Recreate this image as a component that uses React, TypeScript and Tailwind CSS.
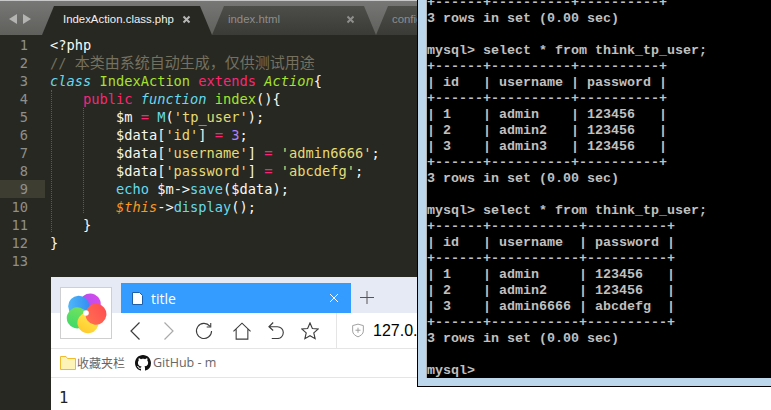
import React from 'react';

const C = {
  pink: 'text-[#f92672]',
  blue: 'text-[#66d9ef]',
  green: 'text-[#a6e22e]',
  yellow: 'text-[#e6db74]',
  purple: 'text-[#ae81ff]',
  orange: 'text-[#fd971f]',
  gray: 'text-[#75715e]',
};

const S: React.FC<{ c: string; i?: boolean; children: React.ReactNode }> = ({ c, i, children }) => (
  <span className={`${c} ${i ? 'italic' : ''}`}>{children}</span>
);

const codeLines: React.ReactNode[] = [
  <>{'<?php'}</>,
  <span className={C.gray}>// <span className="text-[15px]">{'本类由系统自动生成\uFF0C仅供测试用途'}</span></span>,
  <>
    <S c={C.blue} i>class</S> <S c={C.green}>IndexAction</S> <S c={C.pink}>extends</S> <S c={C.green} i>Action</S>{'{'}
  </>,
  <>
    {'    '}<S c={C.pink}>public</S> <S c={C.blue} i>function</S> <S c={C.green}>index</S>{'(){'}
  </>,
  <>
    {'        $m '}<S c={C.pink}>=</S> <S c={C.blue}>M</S>{'('}<S c={C.yellow}>'tp_user'</S>{');'}
  </>,
  <>
    {"        $data["}<S c={C.yellow}>'id'</S>{'] '}<S c={C.pink}>=</S> <S c={C.purple}>3</S>{';'}
  </>,
  <>
    {"        $data["}<S c={C.yellow}>'username'</S>{'] '}<S c={C.pink}>=</S> <S c={C.yellow}>'admin6666'</S>{';'}
  </>,
  <>
    {"        $data["}<S c={C.yellow}>'password'</S>{'] '}<S c={C.pink}>=</S> <S c={C.yellow}>'abcdefg'</S>{';'}
  </>,
  <>
    {'        '}<S c={C.blue}>echo</S>{' $m->'}<S c={C.blue}>save</S>{'($data);'}
  </>,
  <>
    {'        '}<S c={C.orange} i>$this</S>{'->'}<S c={C.blue}>display</S>{'();'}
  </>,
  <>{'    }'}</>,
  <>{'}'}</>,
  <>{' '}</>,
];

const consoleText = `+------+----------+----------+
3 rows in set (0.00 sec)

mysql> select * from think_tp_user;
+------+----------+----------+
| id   | username | password |
+------+----------+----------+
| 1    | admin    | 123456   |
| 2    | admin2   | 123456   |
| 3    | admin3   | 123456   |
+------+----------+----------+
3 rows in set (0.00 sec)

mysql> select * from think_tp_user;
+------+-----------+----------+
| id   | username  | password |
+------+-----------+----------+
| 1    | admin     | 123456   |
| 2    | admin2    | 123456   |
| 3    | admin6666 | abcdefg  |
+------+-----------+----------+
3 rows in set (0.00 sec)

mysql>`;

const TabClose = ({ color }: { color: string }) => (
  <svg width="9" height="9" viewBox="0 0 9 9" className="shrink-0">
    <path d="M1.5 1.5l6 6M7.5 1.5l-6 6" stroke={color} strokeWidth="2" />
  </svg>
);

const Editor = () => (
  <div className="h-[277px] bg-[#272822] overflow-hidden flex flex-col">
    {/* tab strip */}
    <div className="h-[35px] shrink-0 flex border-t border-[#c8c8c8] bg-gradient-to-b from-[#777775] to-[#5f605c]">
      <div className="w-[42px] shrink-0 flex items-center pl-[9px] gap-[6px] pt-[2px]">
        <svg width="8" height="10" viewBox="0 0 8 10" className="shrink-0"><path d="M8 0v10L0 5z" fill="#b4b4b2" /></svg>
        <svg width="8" height="10" viewBox="0 0 8 10" className="shrink-0"><path d="M0 0v10l8-5z" fill="#b4b4b2" /></svg>
      </div>
      <div className="w-[170px] shrink-0 mt-[5px] bg-[#272822] [clip-path:polygon(12px_0,158px_0,170px_100%,0_100%)] flex items-center pl-[21px] pb-[2px] text-[11.4px] text-[#f1f1ef] font-['Liberation_Sans',sans-serif]">
        <span className="w-[119px] shrink-0 whitespace-nowrap">IndexAction.class.php</span>
        <TabClose color="#b6b6b4" />
      </div>
      <div className="w-[164px] shrink-0 mt-[5px] bg-gradient-to-b from-[#4d4d4a] to-[#3a3b36] [clip-path:polygon(12px_0,152px_0,164px_100%,0_100%)] flex items-center pl-[16px] pb-[2px] text-[11.4px] text-[#8e8e8c] font-['Liberation_Sans',sans-serif]">
        <span className="w-[118px] shrink-0">index.html</span>
        <TabClose color="#8e8e8c" />
      </div>
      <div className="flex-1 mt-[5px] bg-gradient-to-b from-[#4d4d4a] to-[#3a3b36] [clip-path:polygon(12px_0,100%_0,100%_100%,0_100%)] flex items-center pl-[16px] pb-[2px] text-[11.4px] text-[#8e8e8c] font-['Liberation_Sans',sans-serif] overflow-hidden">
        config
      </div>
    </div>
    {/* code */}
    <div className="pt-px flex text-[13.7px] leading-[18px] font-['DejaVu_Sans_Mono','Noto_Sans_CJK_SC',monospace] text-[#f8f8f2]">
      <div className="w-[45px] shrink-0">
        {codeLines.map((_, i) => (
          <div key={i} className={`h-[18px] pr-[17px] text-right text-[#8f908a] ${i === 8 ? 'bg-[#3e3d32]' : ''}`}>
            {i + 1}
          </div>
        ))}
      </div>
      <div className="relative pl-[5px] flex-1 whitespace-pre">
        <div className="absolute left-[6px] top-[54px] h-[142px] border-l border-dotted border-[#5a5b52]" />
        <div className="absolute left-[38px] top-[72px] h-[105px] border-l border-dotted border-[#5a5b52]" />
        {codeLines.map((l, i) => (
          <div key={i} className="h-[18px]">{l}</div>
        ))}
      </div>
    </div>
  </div>
);

const Logo = () => (
  <svg width="42" height="42" viewBox="0 0 42 42" className="shrink-0">
    <defs>
      <linearGradient id="pb" x1="0" y1="0" x2="1" y2="1"><stop offset="0" stopColor="#55c0fb" /><stop offset="1" stopColor="#2f86f0" /></linearGradient>
      <linearGradient id="pp" x1="0" y1="1" x2="1" y2="0"><stop offset="0" stopColor="#9a55f5" /><stop offset="1" stopColor="#e348e8" /></linearGradient>
      <linearGradient id="pr" x1="0" y1="0" x2="1" y2="1"><stop offset="0" stopColor="#ff4a52" /><stop offset="1" stopColor="#ff7350" /></linearGradient>
      <linearGradient id="py" x1="1" y1="0" x2="0" y2="1"><stop offset="0" stopColor="#ffc425" /><stop offset="1" stopColor="#fff05a" /></linearGradient>
      <linearGradient id="pg" x1="0" y1="0" x2="1" y2="1"><stop offset="0" stopColor="#35d86a" /><stop offset="1" stopColor="#7be35c" /></linearGradient>
    </defs>
    <g transform="translate(21 21)">
      <circle cy="-10" r="10.5" transform="rotate(25)" fill="url(#pp)" />
      <circle cy="-10" r="10.5" transform="rotate(313)" fill="url(#pb)" />
      <circle cy="-10" r="10.5" transform="rotate(241)" fill="url(#pg)" />
      <circle cy="-10" r="10.5" transform="rotate(169)" fill="url(#py)" />
      <circle cy="-10" r="10.5" transform="rotate(97)" fill="url(#pr)" />
      <circle r="2.8" fill="#fff" />
    </g>
  </svg>
);

const navStroke = { fill: 'none', stroke: '#3c3c3c', strokeWidth: 1.2 };

const Browser = () => (
  <div className="relative flex-1 min-w-0 bg-white flex flex-col overflow-hidden font-['Liberation_Sans',sans-serif]">
    {/* logo tile sits over the tab bar and toolbar */}
    <div className="absolute left-[9px] top-[10px] w-[52px] h-[52px] bg-white border border-[#cfcfcf] flex items-center justify-center">
      <Logo />
    </div>
    <div className="h-[36px] shrink-0 bg-[#e6eaf4] flex items-end pl-[70px]">
      <div className="w-[230px] h-[30px] shrink-0 bg-[#349bff] flex items-center pl-[11px] pr-[12px] text-white text-[14px]">
        <svg width="11" height="13" viewBox="0 0 11 13" className="shrink-0">
          <path d="M.5.5h7l3 3v9H.5z" fill="#fff" stroke="#1c5fa8" strokeWidth="1" />
        </svg>
        <span className="ml-[8px] flex-1 font-['Open_Sans',sans-serif]">title</span>
        <svg width="10" height="10" viewBox="0 0 10 10" className="shrink-0"><path d="M1 1l8 8M9 1l-8 8" stroke="#fff" strokeWidth="1" /></svg>
      </div>
      <svg width="14" height="14" viewBox="0 0 14 14" className="ml-[9px] mb-[8px] shrink-0"><path d="M7 0v13M0 6.5h14" stroke="#555" strokeWidth="1" /></svg>
    </div>
    <div className="h-[36px] shrink-0 border-b border-[#e5e5e5] flex items-center pl-[79px]">
      <svg width="10" height="18" viewBox="0 0 10 18" className="shrink-0"><path d="M9.5.5L1 9l8.5 8.5" {...navStroke} /></svg>
      <svg width="10" height="18" viewBox="0 0 10 18" className="ml-[24px] shrink-0"><path d="M.5.5L9 9 .5 17.5" {...navStroke} stroke="#aaa" /></svg>
      <svg width="18" height="18" viewBox="0 0 20 20" className="ml-[21px] shrink-0"><path d="M16.5 4.6A8.4 8.4 0 1 0 18.4 10M17.5 1v4.5H13" {...navStroke} /></svg>
      <svg width="18" height="18" viewBox="0 0 20 19" className="ml-[20px] shrink-0"><path d="M.5 10L10 .8 19.5 10M3.5 7.5v11h13v-11" {...navStroke} /></svg>
      <svg width="16" height="17" viewBox="0 0 17 18" className="ml-[17px] shrink-0"><path d="M5.5 .5L1 5l4.5 4M1 5h9a6 6 0 0 1 0 12.5H4" {...navStroke} /></svg>
      <svg width="18" height="18" viewBox="0 0 19 19" className="ml-[17px] shrink-0"><path d="M9.5 1l2.5 5.8 6.2.6-4.7 4.1 1.4 6.1-5.4-3.2-5.4 3.2 1.4-6.1L.8 7.4 7 6.8z" {...navStroke} /></svg>
      <div className="ml-[17px] w-px h-[35px] bg-[#e5e5e5] shrink-0" />
      <svg width="12" height="15" viewBox="0 0 13 15" className="ml-[15px] shrink-0"><path d="M.7 2.2L6.5.6l5.8 1.6v6c0 3-3 5-5.8 6.2C3.7 13.2.7 11.2.7 8.2zM6.5 4.5v5.5M3.8 7.2h5.4" fill="none" stroke="#999" strokeWidth="1" /></svg>
      <span className="ml-[9px] text-[16px] text-black whitespace-nowrap">127.0.0.1</span>
    </div>
    <div className="h-[29px] shrink-0 border-b border-[#e5e5e5] flex items-center pl-[9px] text-[12px] text-[#666]">
      <svg width="16" height="14" viewBox="0 0 16 14" className="shrink-0"><path d="M.5 13.5V.5h5.5l1.5 2h8v11z" fill="#fdf2b8" stroke="#f2bb2e" strokeWidth="1" /></svg>
      <span className="ml-px font-['Noto_Sans_CJK_SC',sans-serif]">收藏夹栏</span>
      <svg width="16" height="16" viewBox="0 0 16 16" className="ml-[10px] shrink-0"><path fill="#111" d="M8 0C3.58 0 0 3.58 0 8c0 3.54 2.29 6.53 5.47 7.59.4.07.55-.17.55-.38 0-.19-.01-.82-.01-1.49-2.01.37-2.53-.49-2.69-.94-.09-.23-.48-.94-.82-1.13-.28-.15-.68-.52-.01-.53.63-.01 1.08.58 1.23.82.72 1.21 1.87.87 2.33.66.07-.52.28-.87.51-1.07-1.78-.2-3.64-.89-3.64-3.95 0-.87.31-1.59.82-2.15-.08-.2-.36-1.02.08-2.12 0 0 .67-.21 2.2.82.64-.18 1.32-.27 2-.27s1.36.09 2 .27c1.53-1.04 2.2-.82 2.2-.82.44 1.1.16 1.92.08 2.12.51.56.82 1.27.82 2.15 0 3.07-1.87 3.75-3.65 3.95.29.25.54.73.54 1.48 0 1.07-.01 1.93-.01 2.2 0 .21.15.46.55.38A8.01 8.01 0 0 0 16 8c0-4.42-3.58-8-8-8z" /></svg>
      <span className="ml-[2px] text-[12.5px] font-['Open_Sans',sans-serif]">GitHub - m</span>
    </div>
    <div className="pl-[8px] pt-[11px] text-[15.5px] leading-[18px] text-[#222] font-['DejaVu_Sans_Mono',monospace]">1</div>
  </div>
);

const Terminal = () => (
  <div className="flex-1 self-start h-[387px] bg-[#bcd6ec] border-l border-b border-black pl-[8px] pb-[8px] overflow-hidden">
    <div className="h-full bg-black border-l border-white/70 overflow-hidden">
      <pre className="-mt-[5px] text-[13.33px] leading-[16px] font-bold text-[#c0c0c0] font-['Liberation_Mono',monospace]">{consoleText}</pre>
    </div>
  </div>
);

export default function App() {
  return (
    <div className="w-[771px] h-[410px] bg-white flex overflow-hidden">
      <div className="w-[417px] shrink-0 flex flex-col">
        <Editor />
        <div className="flex-1 min-h-0 flex">
          <div className="w-[51px] shrink-0 bg-[#272822]" />
          <Browser />
        </div>
      </div>
      <Terminal />
    </div>
  );
}
